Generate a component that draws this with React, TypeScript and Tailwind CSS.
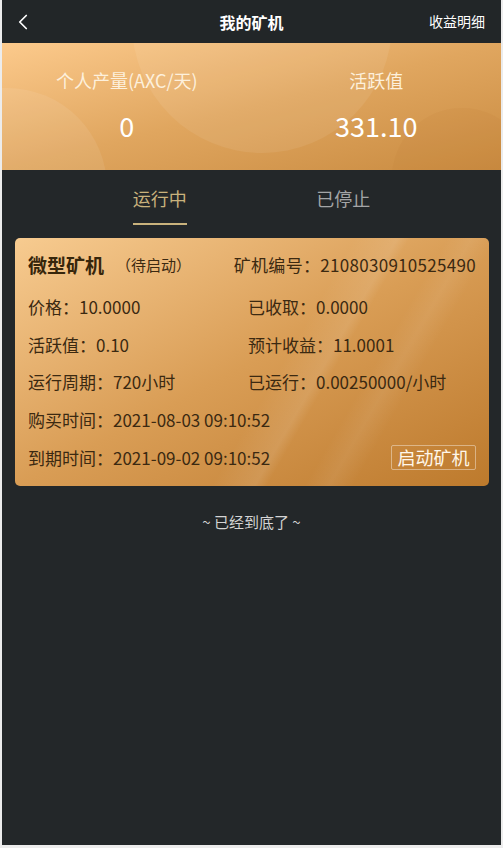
import { ChevronLeft } from "lucide-react";

interface Field {
  label: string;
  value: string;
}

const rows: Field[][] = [
  [
    { label: "价格", value: "10.0000" },
    { label: "已收取", value: "0.0000" },
  ],
  [
    { label: "活跃值", value: "0.10" },
    { label: "预计收益", value: "11.0001" },
  ],
  [
    { label: "运行周期", value: "720小时" },
    { label: "已运行", value: "0.00250000/小时" },
  ],
];

function Header() {
  return (
    <div className="h-[43px] bg-[#222628] flex items-center justify-between pl-[8px] pr-[14px] relative">
      <ChevronLeft className="w-[26px] h-[26px] text-white" strokeWidth={1.6} />
      <div className="absolute left-0 right-0 text-center text-[16px] font-bold text-white pointer-events-none">
        我的矿机
      </div>
      <div className="text-[14px] text-white pr-[2px]">收益明细</div>
    </div>
  );
}

function Banner() {
  return (
    <div className="relative h-[127px] overflow-hidden bg-gradient-to-br from-[#fcca8c] via-[#e0a65f] to-[#c98b40]">
      <div className="absolute w-[260px] h-[260px] rounded-full bg-white/[0.07] left-[130px] top-[-150px]" />
      <div className="absolute w-[200px] h-[200px] rounded-full bg-white/[0.08] left-[-95px] top-[45px]" />
      <div className="absolute w-[140px] h-[140px] rounded-full bg-[#b87a30]/[0.10] left-[390px] top-[65px]" />
      <div className="relative grid grid-cols-2 h-full pt-[22px]">
        <div className="flex flex-col items-center">
          <div className="text-[18px] text-[#fdf0dc] leading-[30px]">个人产量(AXC/天)</div>
          <div className="text-[27px] text-white leading-[40px] mt-[11px]">0</div>
        </div>
        <div className="flex flex-col items-center">
          <div className="text-[18px] text-[#fdf0dc] leading-[30px]">活跃值</div>
          <div className="text-[27px] text-white leading-[40px] mt-[11px]">331.10</div>
        </div>
      </div>
    </div>
  );
}

function Tabs() {
  return (
    <div className="flex px-[66px] h-[56px]">
      <div className="flex-1 flex justify-center">
        <div className="flex flex-col items-center pt-[13px]">
          <div className="text-[18px] leading-[30px] text-[#c9b27c]">运行中</div>
          <div className="w-[54px] h-[2px] bg-[#c9b27c] mt-[10px]" />
        </div>
      </div>
      <div className="flex-1 flex justify-center">
        <div className="pt-[13px] text-[18px] leading-[30px] text-[#a3a5a6]">已停止</div>
      </div>
    </div>
  );
}

function Line({ label, value }: Field) {
  return (
    <div className="whitespace-nowrap">
      {label}：{value}
    </div>
  );
}

function MinerCard() {
  return (
    <div className="ml-[13px] mr-[12px] mt-[12px] rounded-[5px] relative overflow-hidden bg-gradient-to-br from-[#f7cb90] via-[#d99d55] to-[#bd7a2c] text-[#3b2911]">
      <div className="absolute inset-0 bg-[linear-gradient(120deg,transparent_55%,rgba(255,255,255,0.10)_62%,transparent_64%,transparent_70%,rgba(255,255,255,0.07)_74%,transparent_78%)]" />
      <div className="relative px-[13px] pt-[12px] pb-[10px] text-[17px]">
        <div className="flex items-center justify-between h-[30px]">
          <div className="flex items-center">
            <span className="text-[19px] font-bold text-[#37260b]">微型矿机</span>
            <span className="text-[15px] ml-[12px]">（待启动）</span>
          </div>
          <div className="whitespace-nowrap tracking-[0.3px]">矿机编号：2108030910525490</div>
        </div>
        <div className="mt-[8px] flex flex-col">
          {rows.map((r, i) => (
            <div key={i} className="grid grid-cols-[220px_1fr] h-[37.5px] items-center">
              <Line {...r[0]} />
              <Line {...r[1]} />
            </div>
          ))}
          <div className="h-[38.5px] flex items-center">
            <Line label="购买时间" value="2021-08-03 09:10:52" />
          </div>
          <div className="h-[37px] flex items-center justify-between">
            <Line label="到期时间" value="2021-09-02 09:10:52" />
            <div className="h-[25px] w-[85px] border border-white/40 rounded-[2px] flex items-center justify-center text-[18px] text-[#fff7ea]">
              启动矿机
            </div>
          </div>
        </div>
      </div>
    </div>
  );
}

export default function App() {
  return (
    <div
      className="min-h-[848px] bg-[#232729] border-l-2 border-r-2 border-b-[3px] border-[#ececec]"
      style={{ fontFamily: '"Noto Sans CJK SC", "Noto Sans", sans-serif' }}
    >
      <Header />
      <Banner />
      <Tabs />
      <MinerCard />
      <div className="text-center text-[15px] text-[#d4d4d4] mt-[25px]">~ 已经到底了 ~</div>
    </div>
  );
}
